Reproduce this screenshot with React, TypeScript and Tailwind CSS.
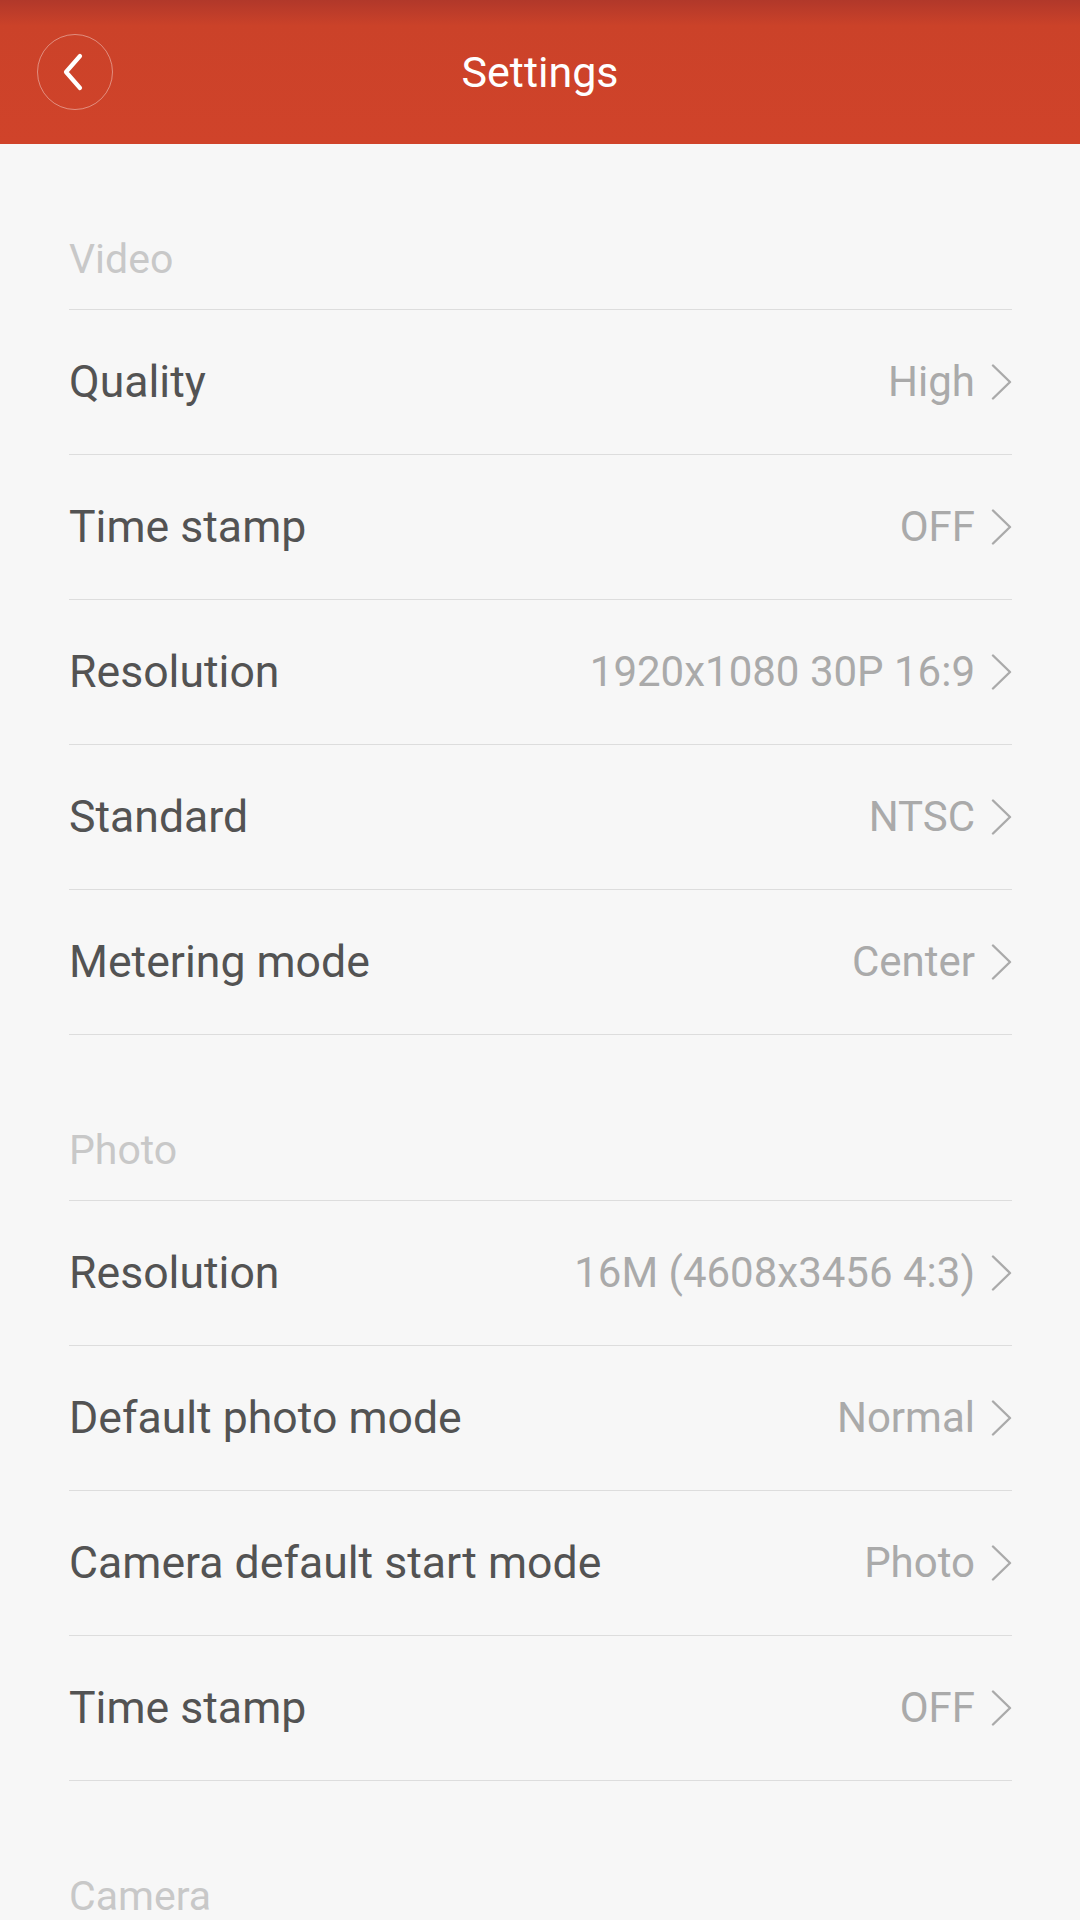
import React from "react";

type Row = { label: string; value: string };

const sections: { title: string; rows: Row[] }[] = [
  {
    title: "Video",
    rows: [
      { label: "Quality", value: "High" },
      { label: "Time stamp", value: "OFF" },
      { label: "Resolution", value: "1920x1080 30P 16:9" },
      { label: "Standard", value: "NTSC" },
      { label: "Metering mode", value: "Center" },
    ],
  },
  {
    title: "Photo",
    rows: [
      { label: "Resolution", value: "16M (4608x3456 4:3)" },
      { label: "Default photo mode", value: "Normal" },
      { label: "Camera default start mode", value: "Photo" },
      { label: "Time stamp", value: "OFF" },
    ],
  },
  {
    title: "Camera",
    rows: [],
  },
];

function Chevron() {
  return (
    <svg width="21" height="36" viewBox="0 0 21 36" fill="none" className="shrink-0">
      <path d="M2 1.5 L19 18 L2 34.5" stroke="#aaaaaa" strokeWidth="2.4" strokeLinecap="round" strokeLinejoin="round" />
    </svg>
  );
}

export default function App() {
  return (
    <div
      className="w-[1080px] h-[1920px] overflow-hidden bg-[#f7f7f7]"
      style={{ fontFamily: "Roboto, 'Noto Sans', sans-serif" }}
    >
      <header className="h-[144px] bg-linear-to-b from-[#b1382a] via-[#cb4229] via-[18%] to-[#d0432a] grid grid-cols-[1fr_auto_1fr] items-center">
        <div className="pl-[37px] flex items-center">
          <div className="w-[76px] h-[76px] rounded-full border-[1.5px] border-white/40 flex items-center justify-center">
            <svg width="24" height="38" viewBox="0 0 24 38" fill="none" className="-ml-[5px]">
              <path d="M19 3 L5 19 L19 35" stroke="white" strokeWidth="4.2" strokeLinecap="round" strokeLinejoin="round" />
            </svg>
          </div>
        </div>
        <h1 className="text-[43px] leading-none text-white font-normal">Settings</h1>
        <div />
      </header>

      <main className="px-[69px] pr-[68px]">
        {sections.map((s) => (
          <section key={s.title}>
            <div className="h-[166px] border-b border-[#dddddd] pt-[95px]">
              <span className="text-[41px] leading-none text-[#c8c8c8] block">{s.title}</span>
            </div>
            {s.rows.map((r, i) => (
              <div
                key={i}
                className="h-[145px] border-b border-[#dddddd] flex items-center justify-between"
              >
                <span className="text-[44.6px] leading-none text-[#535353]">{r.label}</span>
                <div className="flex items-center gap-[16px]">
                  <span className="text-[42px] leading-none text-[#aaaaaa]">{r.value}</span>
                  <Chevron />
                </div>
              </div>
            ))}
          </section>
        ))}
      </main>
    </div>
  );
}
